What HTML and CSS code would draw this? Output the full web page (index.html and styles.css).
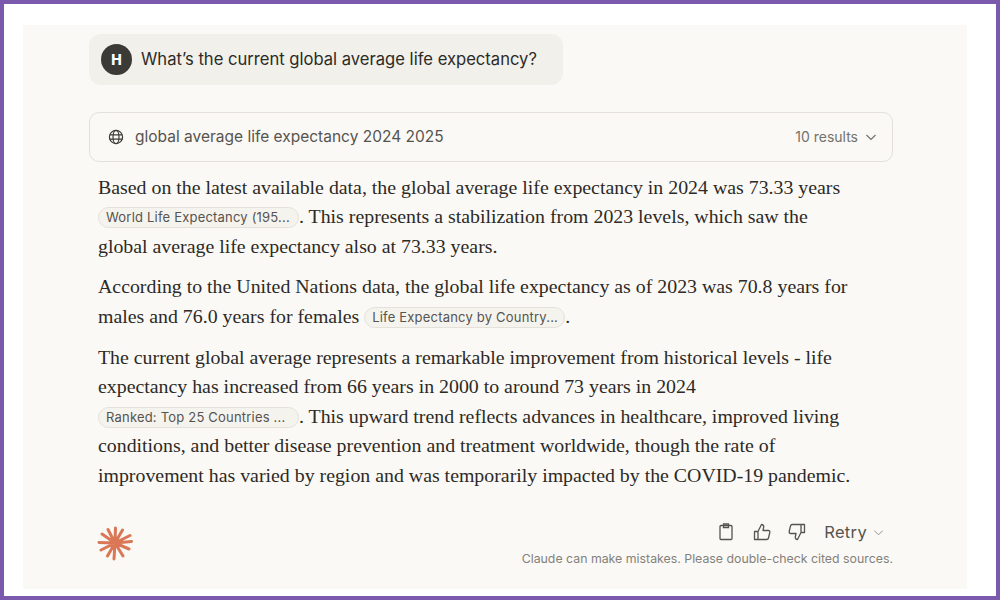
FILE: index.html
```html
<!DOCTYPE html>
<html lang="en">
<head>
<meta charset="utf-8">
<title>Claude answer</title>
<link rel="stylesheet" href="styles.css">
</head>
<body>
<div class="frame">
  <main class="panel">
    <div class="user-msg">
      <span class="avatar">H</span>
      <span class="user-text">What’s the current global average life expectancy?</span>
    </div>
    <div class="search-bar">
      <svg class="globe" viewBox="0 0 16 16" width="16" height="16" fill="none" stroke="#3d3d3a" stroke-width="1.2"><circle cx="8" cy="8" r="6.6"/><ellipse cx="8" cy="8" rx="3" ry="6.6"/><path d="M1.6 5.8h12.8M1.6 10.2h12.8"/></svg>
      <span class="search-text">global average life expectancy 2024 2025</span>
      <span class="results">10 results</span>
      <svg class="chev" viewBox="0 0 12 12" width="12" height="12" fill="none" stroke="#73726c" stroke-width="1.2"><path d="M1.5 4l4.5 4.5L10.500 4"/></svg>
    </div>
    <div class="answer">
      <p>Based on the latest available data, the global average life expectancy in 2024 was 73.33 years<br><span class="cite">World Life Expectancy (195...</span>. This represents a stabilization from 2023 levels, which saw the<br>global average life expectancy also at 73.33 years.</p>
      <p>According to the United Nations data, the global life expectancy as of 2023 was 70.8 years for<br>males and 76.0 years for females <span class="cite">Life Expectancy by Country...</span>.</p>
      <p>The current global average represents a remarkable improvement from historical levels - life<br>expectancy has increased from 66 years in 2000 to around 73 years in 2024<br><span class="cite">Ranked: Top 25 Countries ...</span>. This upward trend reflects advances in healthcare, improved living<br>conditions, and better disease prevention and treatment worldwide, though the rate of<br>improvement has varied by region and was temporarily impacted by the COVID-19 pandemic.</p>
    </div>
    <div class="footer">
      <svg class="spark" viewBox="0 0 36 36" width="36" height="36" fill="none" stroke="#d97757" stroke-width="3" stroke-linecap="round"><path d="M18 18L18.500 3M18 18L25.500 5M18 18L33 10.500M18 18L34.500 16.500M18 18L32 24M18 18L26 31M18 18L17 34M18 18L10.500 31M18 18L4 25M18 18L2 17.500M18 18L5 9M18 18L11 4.500"/></svg>
      <div class="footer-right">
        <div class="actions">
          <svg class="ico-clip" viewBox="0 0 16 18" width="16" height="18" fill="none" stroke="#55544f" stroke-width="1.3"><rect x="2" y="2.500" width="12" height="14" rx="1"/><path d="M5.500 1h5v3.500h-5z"/></svg>
          <svg class="ico-up" viewBox="0 0 18 18" width="18" height="18" fill="none" stroke="#55544f" stroke-width="1.3" stroke-linejoin="round"><path d="M1.500 8.500h3.500v8H1.500zM5 8.500L8.500 1.500c1.500 0 2.500 1 2.200 2.500l-.7 3.500h5.500c1 0 1.500 1 1.300 2l-1.300 5.500c-.2.800-.8 1.500-1.800 1.500H5"/></svg>
          <svg class="ico-down" viewBox="0 0 18 18" width="18" height="18" fill="none" stroke="#55544f" stroke-width="1.300" stroke-linejoin="round"><path d="M16.500 9.500H13v-8h3.500zM13 9.500L9.500 16.500c-1.500 0-2.500-1-2.200-2.500l.7-3.500H2.500c-1 0-1.500-1-1.300-2L2.500 3c.2-.8.800-1.500 1.800-1.500H13"/></svg>
          <span class="retry">Retry</span>
          <svg class="chev" viewBox="0 0 12 12" width="11" height="11" fill="none" stroke="#8a8983" stroke-width="1"><path d="M1.500 4l4.500 4.500L10.500 4"/></svg>
        </div>
        <div class="disclaimer">Claude can make mistakes. Please double-check cited sources.</div>
      </div>
    </div>
  </main>
</div>
</body>
</html>
```
FILE: styles.css
```css
* { box-sizing: border-box; }
html, body { margin: 0; height: 100%; }
body { font-family: "Inter", "Liberation Sans", sans-serif; color: #2f2e2b; }
.frame {
  width: 1000px; height: 600px;
  border: 4px solid #7b5aae;
  background: #fff;
  padding: 21px 29px 7px 19px;
  display: flex;
}
.panel {
  flex: 1;
  background: #fbf9f5;
  padding: 9px 74px 0 66px;
  display: flex;
  flex-direction: column;
}
.user-msg {
  align-self: flex-start;
  width: 474px; height: 51px;
  background: #f2f0ea;
  border-radius: 12px;
  display: flex; align-items: center;
  padding-left: 12px;
  gap: 9px;
}
.avatar {
  width: 31px; height: 31px; border-radius: 50%;
  background: #3b3a36; color: #fff;
  font-size: 14px; font-weight: 800;
  display: flex; align-items: center; justify-content: center;
}
.user-text { font-size: 16.600px; line-height: 20px; margin-top: -2px; color: #2c2b28; white-space: nowrap; }
.search-bar {
  margin-top: 27px;
  height: 50px;
  border: 1px solid #e3e1da;
  border-radius: 10px;
  display: flex; align-items: center;
  padding: 0 15px 0 18px;
  color: #55544f;
}
.search-text { margin: -2px 0 0 11px; font-size: 15.500px; flex: 1; white-space: nowrap; }
.results { font-size: 14px; color: #73726c; margin: -2px 7px 0 0; }
.answer {
  margin-top: 11px;
  padding-left: 9px;
  font-family: "Liberation Serif", serif;
  font-size: 19.850px;
  line-height: 29.400px;
  color: #2b2a27;
  white-space: nowrap;
}
.answer p { margin: 0 0 12px; }
.answer p:first-child { margin-bottom: 11px; }
.cite {
  display: inline-block;
  vertical-align: 1px;
  width: 201px;
  height: 21px;
  padding: 0 7px;
  border: 1px solid #e3e1da;
  border-radius: 11px;
  background: #f5f3ee;
  font-family: "Inter", "Liberation Sans", sans-serif;
  font-size: 13px;
  letter-spacing: .2px;
  line-height: 18px;
  color: #55544f;
}
.footer {
  margin-top: 16px;
  display: flex;
  justify-content: space-between;
  align-items: flex-start;
}
.spark { margin: 7px 0 0 8px; }
.footer-right { display: flex; flex-direction: column; align-items: flex-end; }
.actions { display: flex; align-items: center; height: 28px; padding-right: 9px; }
.ico-up { margin-left: 19px; }
.ico-down { margin-left: 17px; }
.retry { font-size: 16.500px; color: #55544f; margin-left: 18px; letter-spacing: .02em; }
.actions .chev { margin-left: 6px; }
.disclaimer { font-size: 12.330px; color: #82817b; margin-top: 5px; white-space: nowrap; }
```
